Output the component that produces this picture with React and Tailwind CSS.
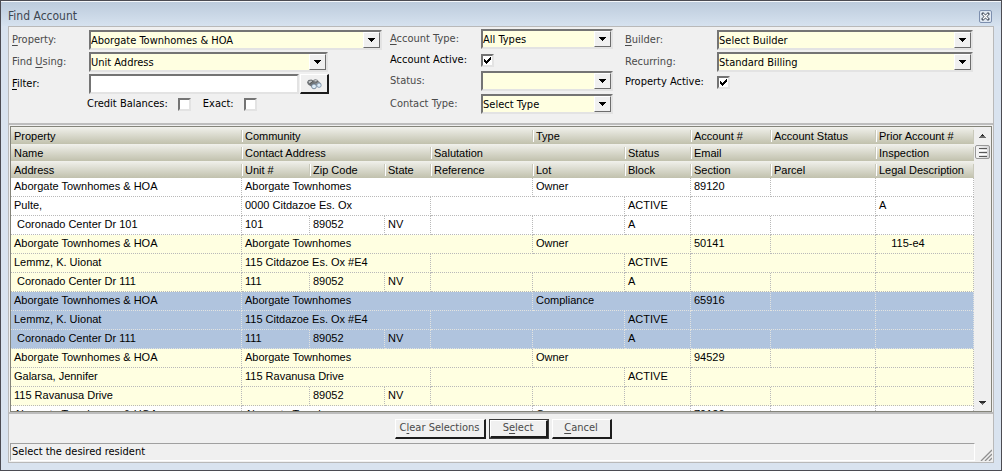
import React from "react";

const ROWS = [
  {
    tone: "plain",
    lines: [
      ["Aborgate Townhomes & HOA", "Aborgate Townhomes", "Owner", "89120", "", ""],
      ["Pulte,", "0000 Citdazoe Es. Ox", "", "ACTIVE", "", "A"],
      ["\u00a0Coronado Center Dr 101", "101", "89052", "NV", "", "", "A", "", "", ""],
    ],
  },
  {
    tone: "cream",
    lines: [
      ["Aborgate Townhomes & HOA", "Aborgate Townhomes", "Owner", "50141", "", "\u00a0\u00a0\u00a0\u00a0115-e4"],
      ["Lemmz, K. Uionat", "115 Citdazoe Es. Ox #E4", "", "ACTIVE", "", ""],
      ["\u00a0Coronado Center Dr 111", "111", "89052", "NV", "", "", "A", "", "", ""],
    ],
  },
  {
    tone: "selected",
    lines: [
      ["Aborgate Townhomes & HOA", "Aborgate Townhomes", "Compliance", "65916", "", ""],
      ["Lemmz, K. Uionat", "115 Citdazoe Es. Ox #E4", "", "ACTIVE", "", ""],
      ["\u00a0Coronado Center Dr 111", "111", "89052", "NV", "", "", "A", "", "", ""],
    ],
  },
  {
    tone: "cream",
    lines: [
      ["Aborgate Townhomes & HOA", "Aborgate Townhomes", "Owner", "94529", "", ""],
      ["Galarsa, Jennifer", "115 Ravanusa Drive", "", "ACTIVE", "", ""],
      ["115 Ravanusa Drive", "", "89052", "NV", "", "", "", "", "", ""],
    ],
  },
  {
    tone: "plain",
    lines: [["Aborgate Townhomes & HOA", "Aborgate Townhomes", "Owner", "79120", "", ""]],
  },
];

const HEADERS = [
  ["Property", "Community", "Type", "Account #", "Account Status", "Prior Account #"],
  ["Name", "Contact Address", "Salutation", "Status", "Email", "Inspection"],
  ["Address", "Unit #", "Zip Code", "State", "Reference", "Lot", "Block", "Section", "Parcel", "Legal Description"],
];

const SPANS = [
  [1, 4, 2, 1, 1, 1],
  [1, 3, 2, 1, 2, 1],
  [1, 1, 1, 1, 1, 1, 1, 1, 1, 1],
];

const TONES = {
  plain: "bg-white",
  cream: "bg-[#ffffe1]",
  selected: "bg-[#b0c4de]",
};

const LINES = {
  plain: "border-[#b9b9b9]",
  cream: "border-[#b9b9b9]",
  selected: "border-[#e4e4e0]",
};

const RAISED = "border border-t-white border-l-white border-r-[#6d6d6d] border-b-[#6d6d6d]";
const SUNKEN = "border-2 border-t-[#747474] border-l-[#747474] border-r-[#e3e3e3] border-b-[#e3e3e3]";
const BUTTON =
  "h-5 border-t border-l border-r-2 border-b-2 border-t-white border-l-white border-r-[#1c1c1c] border-b-[#1c1c1c] bg-[#f0f0f0] text-[#4a4a4a]";

function Label({ id, strong, children }) {
  return (
    <label htmlFor={id} className={"shrink-0 " + (strong ? "text-black" : "text-[#4a4a4a]")}>
      {children}
    </label>
  );
}

function Key({ children }) {
  return <span className="underline underline-offset-2">{children}</span>;
}

function Select({ id, value }) {
  return (
    <div className={"relative h-5 flex-1 " + SUNKEN}>
      <select id={id} defaultValue={value} className="block h-full w-full appearance-none bg-[#ffffe1] pt-px pr-5 text-black outline-none">
        <option>{value}</option>
      </select>
      <span className={"pointer-events-none absolute top-0 right-0 flex h-4 w-[17px] items-center justify-center bg-[#f0f0f0] " + RAISED}>
        <svg width="7" height="4" viewBox="0 0 7 4" shapeRendering="crispEdges" aria-hidden="true">
          <path d="M0 0h7v1H0zM1 1h5v1H1zM2 2h3v1H2zM3 3h1v1H3z" />
        </svg>
      </span>
    </div>
  );
}

function Check({ id, checked }) {
  return (
    <span className={"relative block size-[13px] shrink-0 bg-white " + SUNKEN}>
      <input id={id} type="checkbox" defaultChecked={checked} className="peer block size-full appearance-none" />
      <svg className="pointer-events-none absolute top-px left-px hidden peer-checked:block" width="7" height="7" viewBox="0 0 7 7" shapeRendering="crispEdges" aria-hidden="true">
        <path d="M0 2h1v3H0zM1 3h1v3H1zM2 4h1v3H2zM3 3h1v3H3zM4 2h1v3H4zM5 1h1v3H5zM6 0h1v3H6z" />
      </svg>
    </span>
  );
}

function Binoculars() {
  return (
    <svg width="16" height="12" viewBox="0 0 16 12" aria-hidden="true">
      <path d="M7 2.2 9.2 1l2.2.8 3.8 4-3.6 3z" fill="#8b8f92" />
      <path d="M1 4.2 2.4 2l3-.6 2.4 1.4L10.6 7 6.6 9.6 2 6.6z" fill="#6f7376" />
      <path d="M2.4 3.6 5 2.4l1.4 1-3 2zM8.2 2.4l1.4-.6 1.6 1-1.4.8z" fill="#c4c7c9" />
      <path d="m3.4 6 3.4-2.6M9.4 4.8 11.8 3.4" stroke="#44484b" strokeWidth="0.7" />
      <circle cx="13" cy="7.2" r="2.2" fill="#dcecf8" stroke="#7f93a8" strokeWidth="0.9" />
      <circle cx="8" cy="8.4" r="2.4" fill="#dcecf8" stroke="#6f8296" strokeWidth="0.9" />
    </svg>
  );
}

function HeaderCell({ text, span, first }) {
  return (
    <th colSpan={span} scope="col" className="h-[17px] p-0 text-left align-middle font-normal">
      <div className={"h-3 overflow-visible border-r border-r-[#c9c9bb] pl-0.5 leading-3 whitespace-nowrap " + (first ? "ml-px" : "border-l border-l-white")}>
        {text}
      </div>
    </th>
  );
}

function ResultsTable() {
  return (
    <table className="w-full table-fixed border-separate border-spacing-0">
      <colgroup>
        <col />
        <col className="w-[68px]" />
        <col className="w-[75px]" />
        <col className="w-[46px]" />
        <col className="w-[102px]" />
        <col className="w-[92px]" />
        <col className="w-[66px]" />
        <col className="w-[80px]" />
        <col className="w-[105px]" />
        <col className="w-[98px]" />
      </colgroup>
      <thead>
        {HEADERS.map((cells, r) => (
          <tr key={r} className="bg-linear-to-b from-[#f1f1ec] to-[#c1c1ad]">
            {cells.map((text, c) => (
              <HeaderCell key={text} text={text} span={SPANS[r][c]} first={c === 0} />
            ))}
          </tr>
        ))}
      </thead>
      {ROWS.map((row, i) => (
        <tbody key={i} className={TONES[row.tone]}>
          {row.lines.map((cells, r) => (
            <tr key={r}>
              {cells.map((text, c) => (
                <td
                  key={c}
                  colSpan={SPANS[r][c]}
                  className={"h-[19px] border-r border-b border-dotted p-0 pl-[3px] align-top leading-4 whitespace-nowrap " + LINES[row.tone]}
                >
                  {text}
                </td>
              ))}
            </tr>
          ))}
        </tbody>
      ))}
    </table>
  );
}

function ScrollBar() {
  return (
    <div className="flex w-[17px] shrink-0 flex-col items-center justify-between bg-[#efefef]">
      <div className="flex w-full flex-col items-center">
        <button type="button" aria-label="Scroll up" className="flex h-[17px] w-full items-center justify-center">
          <svg width="7" height="4" viewBox="0 0 7 4" shapeRendering="crispEdges" aria-hidden="true">
            <path d="M3 0h1v1H3zM2 1h3v1H2z" fill="#2c2c2c" />
            <path d="M1 2h5v1H1zM0 3h7v1H0z" fill="#6c6c6c" />
          </svg>
        </button>
        <div className="mt-px flex h-[14px] w-[15px] flex-col items-center justify-center gap-px rounded-xs border border-[#989898] bg-linear-to-r from-[#f6f6f6] to-[#d4d4d6]">
          <span className="h-px w-2 bg-[#5a5a5a]" />
          <span className="h-px w-2 bg-white" />
          <span className="h-px w-2 bg-[#5a5a5a]" />
          <span className="h-px w-2 bg-white" />
          <span className="h-px w-2 bg-[#5a5a5a]" />
        </div>
      </div>
      <button type="button" aria-label="Scroll down" className="flex h-[17px] w-full items-center justify-center">
        <svg width="7" height="4" viewBox="0 0 7 4" shapeRendering="crispEdges" aria-hidden="true">
          <path d="M0 0h7v1H0zM1 1h5v1H1z" fill="#2c2c2c" />
          <path d="M2 2h3v1H2zM3 3h1v1H3z" fill="#6c6c6c" />
        </svg>
      </button>
    </div>
  );
}

export default function App() {
  return (
    <main className="flex h-screen flex-col border border-[#4b4b52] bg-[#d9e3ef] px-[7px] pb-[7px] font-['DejaVu_Sans_Condensed','DejaVu_Sans',sans-serif] text-[11px] leading-4">
      <header className="-mx-[7px] flex h-[25px] shrink-0 items-center justify-between border-t border-[#f4f7fa] bg-linear-to-b from-[#bccbdc] to-[#d6e2ef] pt-1 pr-[9px] pl-[7px]">
        <h1 className="text-xs text-[#3d4650]">Find Account</h1>
        <button type="button" aria-label="Close" className="flex size-[13px] items-center justify-center rounded-xs border border-[#7d8fae] bg-[#dfe7f1]">
          <svg width="9" height="9" viewBox="0 0 9 9" aria-hidden="true">
            <path d="m2 2 5 5M7 2 2 7" stroke="#4e5766" strokeWidth="2.8" strokeLinecap="square" />
            <path d="m2 2 5 5M7 2 2 7" stroke="#fff" strokeWidth="1.2" />
          </svg>
        </button>
      </header>

      <div className="flex min-h-0 flex-1 flex-col border border-[#b9b9b9] bg-[#f0f0f0]">
        <form className="flex h-[96px] shrink-0 pl-[3px]" onSubmit={(e) => e.preventDefault()}>
          <section className="mt-[3px] flex w-[370px] shrink-0 flex-col gap-0.5">
            <div className="grid grid-cols-[77px_1fr] items-center">
              <Label id="property"><Key>P</Key>roperty:</Label>
              <div className="flex"><Select id="property" value="Aborgate Townhomes & HOA" /></div>
            </div>
            <div className="grid grid-cols-[77px_239px] items-center">
              <Label id="using">Find <Key>U</Key>sing:</Label>
              <div className="flex"><Select id="using" value="Unit Address" /></div>
            </div>
            <div className="grid grid-cols-[77px_210px_30px] items-center">
              <Label id="filter" strong><Key>F</Key>ilter:</Label>
              <input id="filter" type="text" className={"h-5 bg-white px-px outline-none " + SUNKEN} />
              <button type="submit" aria-label="Search" className={"ml-px flex items-center justify-center " + BUTTON}>
                <Binoculars />
              </button>
            </div>
            <div className="flex h-4 items-center pl-[75px]">
              <Label id="credit" strong>Credit Balances:</Label>
              <span className="ml-2.5"><Check id="credit" /></span>
              <span className="ml-3"><Label id="exact" strong>Exact:</Label></span>
              <span className="ml-2.5"><Check id="exact" /></span>
            </div>
          </section>

          <section className="mt-0.5 ml-2 flex w-[223px] shrink-0 flex-col gap-px">
            <div className="grid h-5 grid-cols-[91px_1fr] items-center">
              <Label id="atype"><Key>A</Key>ccount Type:</Label>
              <div className="flex"><Select id="atype" value="All Types" /></div>
            </div>
            <div className="grid h-5 grid-cols-[91px_1fr] items-center">
              <Label id="aactive" strong>Account Active:</Label>
              <Check id="aactive" checked />
            </div>
            <div className="grid h-5 grid-cols-[91px_1fr] items-center">
              <Label id="status">Status:</Label>
              <div className="flex"><Select id="status" value="" /></div>
            </div>
            <div className="mt-0.5 grid h-5 grid-cols-[91px_1fr] items-center">
              <Label id="ctype">Contact Type:</Label>
              <div className="flex"><Select id="ctype" value="Select Type" /></div>
            </div>
          </section>

          <section className="mt-[3px] mr-5 ml-3 flex flex-1 flex-col gap-0.5">
            <div className="grid h-5 grid-cols-[92px_1fr] items-center">
              <Label id="builder"><Key>B</Key>uilder:</Label>
              <div className="flex"><Select id="builder" value="Select Builder" /></div>
            </div>
            <div className="grid h-5 grid-cols-[92px_1fr] items-center">
              <Label id="recurring">Recurring:</Label>
              <div className="flex"><Select id="recurring" value="Standard Billing" /></div>
            </div>
            <div className="grid h-4 grid-cols-[92px_1fr] items-center">
              <Label id="pactive" strong>Property Active:</Label>
              <Check id="pactive" checked />
            </div>
          </section>
        </form>

        <div className="flex min-h-0 flex-1 flex-col border-y-2 border-[#bdbdbd] px-px pt-px">
          <div className="flex min-h-0 flex-1 overflow-hidden border border-[#84847a] bg-white font-['Liberation_Sans',Arial,sans-serif]">
            <div className="min-w-0 flex-1 overflow-hidden">
              <ResultsTable />
            </div>
            <ScrollBar />
          </div>
        </div>

        <div className="flex h-[29px] shrink-0 items-center justify-center gap-[3px] pl-1">
          <button type="button" className={"w-[91px] " + BUTTON}>C<Key>l</Key>ear Selections</button>
          <span className="border border-[#3c3c3c]">
            <button type="button" className={"block h-[18px]! w-[58px] leading-3 " + BUTTON}>S<Key>e</Key>lect</button>
          </span>
          <button type="button" className={"w-[60px] " + BUTTON}><Key>C</Key>ancel</button>
        </div>

        <footer className="flex h-[19px] shrink-0 px-px pb-px">
          <p className="flex-1 border border-t-[#a0a0a0] border-r-white border-b-white border-l-[#a0a0a0] pl-px leading-4">Select the desired resident</p>
          <span className="flex w-[17px] items-end justify-end">
            <svg width="12" height="12" viewBox="0 0 12 12" aria-hidden="true">
              <path d="M1 12 12 1M5 12l7-7M9 12l3-3" stroke="#8f8f8f" strokeWidth="1.3" />
            </svg>
          </span>
        </footer>
      </div>
    </main>
  );
}
